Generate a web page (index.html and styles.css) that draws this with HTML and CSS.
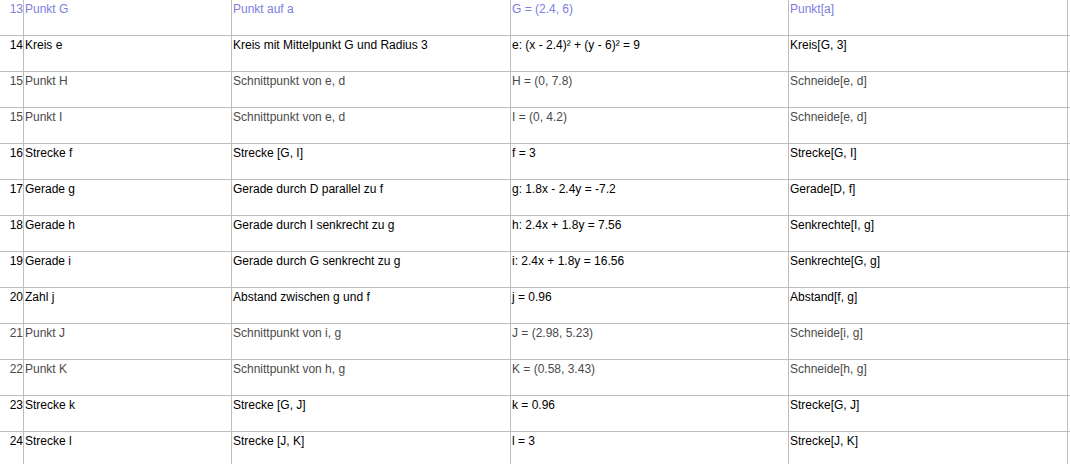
FILE: index.html
```html
<!DOCTYPE html>
<html>
<head>
<meta charset="utf-8">
<link rel="stylesheet" href="styles.css">
</head>
<body>
<table class="algebra">
<colgroup>
<col class="c-num"><col class="c-name"><col class="c-desc"><col class="c-val"><col class="c-cmd"><col class="c-rest">
</colgroup>
<tbody>
<tr class="aux"><td class="num">13</td><td>Punkt G</td><td>Punkt auf a</td><td>G = (2.4, 6)</td><td>Punkt[a]</td><td class="rest"></td></tr>
<tr class="dep"><td class="num">14</td><td>Kreis e</td><td>Kreis mit Mittelpunkt G und Radius 3</td><td>e: (x - 2.4)² + (y - 6)² = 9</td><td>Kreis[G, 3]</td><td class="rest"></td></tr>
<tr class="pt"><td class="num">15</td><td>Punkt H</td><td>Schnittpunkt von e, d</td><td>H = (0, 7.8)</td><td>Schneide[e, d]</td><td class="rest"></td></tr>
<tr class="pt"><td class="num">15</td><td>Punkt I</td><td>Schnittpunkt von e, d</td><td>I = (0, 4.2)</td><td>Schneide[e, d]</td><td class="rest"></td></tr>
<tr class="dep"><td class="num">16</td><td>Strecke f</td><td>Strecke [G, I]</td><td>f = 3</td><td>Strecke[G, I]</td><td class="rest"></td></tr>
<tr class="dep"><td class="num">17</td><td>Gerade g</td><td>Gerade durch D parallel zu f</td><td>g: 1.8x - 2.4y = -7.2</td><td>Gerade[D, f]</td><td class="rest"></td></tr>
<tr class="dep"><td class="num">18</td><td>Gerade h</td><td>Gerade durch I senkrecht zu g</td><td>h: 2.4x + 1.8y = 7.56</td><td>Senkrechte[I, g]</td><td class="rest"></td></tr>
<tr class="dep"><td class="num">19</td><td>Gerade i</td><td>Gerade durch G senkrecht zu g</td><td>i: 2.4x + 1.8y = 16.56</td><td>Senkrechte[G, g]</td><td class="rest"></td></tr>
<tr class="dep"><td class="num">20</td><td>Zahl j</td><td>Abstand zwischen g und f</td><td>j = 0.96</td><td>Abstand[f, g]</td><td class="rest"></td></tr>
<tr class="pt"><td class="num">21</td><td>Punkt J</td><td>Schnittpunkt von i, g</td><td>J = (2.98, 5.23)</td><td>Schneide[i, g]</td><td class="rest"></td></tr>
<tr class="pt"><td class="num">22</td><td>Punkt K</td><td>Schnittpunkt von h, g</td><td>K = (0.58, 3.43)</td><td>Schneide[h, g]</td><td class="rest"></td></tr>
<tr class="dep"><td class="num">23</td><td>Strecke k</td><td>Strecke [G, J]</td><td>k = 0.96</td><td>Strecke[G, J]</td><td class="rest"></td></tr>
<tr class="dep"><td class="num">24</td><td>Strecke l</td><td>Strecke [J, K]</td><td>l = 3</td><td>Strecke[J, K]</td><td class="rest"></td></tr>
</tbody>
</table>
</body>
</html>
```

FILE: styles.css
```css
html, body {
  margin: 0;
  padding: 0;
  background: #ffffff;
}

.algebra {
  border-collapse: separate;
  border-spacing: 0;
  table-layout: fixed;
  width: 1070px;
  font-family: "Liberation Sans", Arial, sans-serif;
  font-size: 12px;
  line-height: 15px;
}

.c-num { width: 24px; }
.c-name { width: 208px; }
.c-desc { width: 279px; }
.c-val { width: 278px; }
.c-cmd { width: 279px; }
.c-rest { width: 2px; }

.algebra td {
  box-sizing: border-box;
  height: 36px;
  padding: 2px 2px 0 1px;
  vertical-align: top;
  text-align: left;
  white-space: nowrap;
  overflow: hidden;
  border-right: 1px solid #bdbdbd;
  border-bottom: 1px solid #bdbdbd;
}

.algebra td.num {
  text-align: right;
  padding: 2px 0 0 0;
}

.algebra td.rest {
  border-right: none;
  padding: 0;
}

.aux td { color: #7d7de0; }
.dep td { color: #000000; }
.pt td { color: #4a4a4a; }
```
